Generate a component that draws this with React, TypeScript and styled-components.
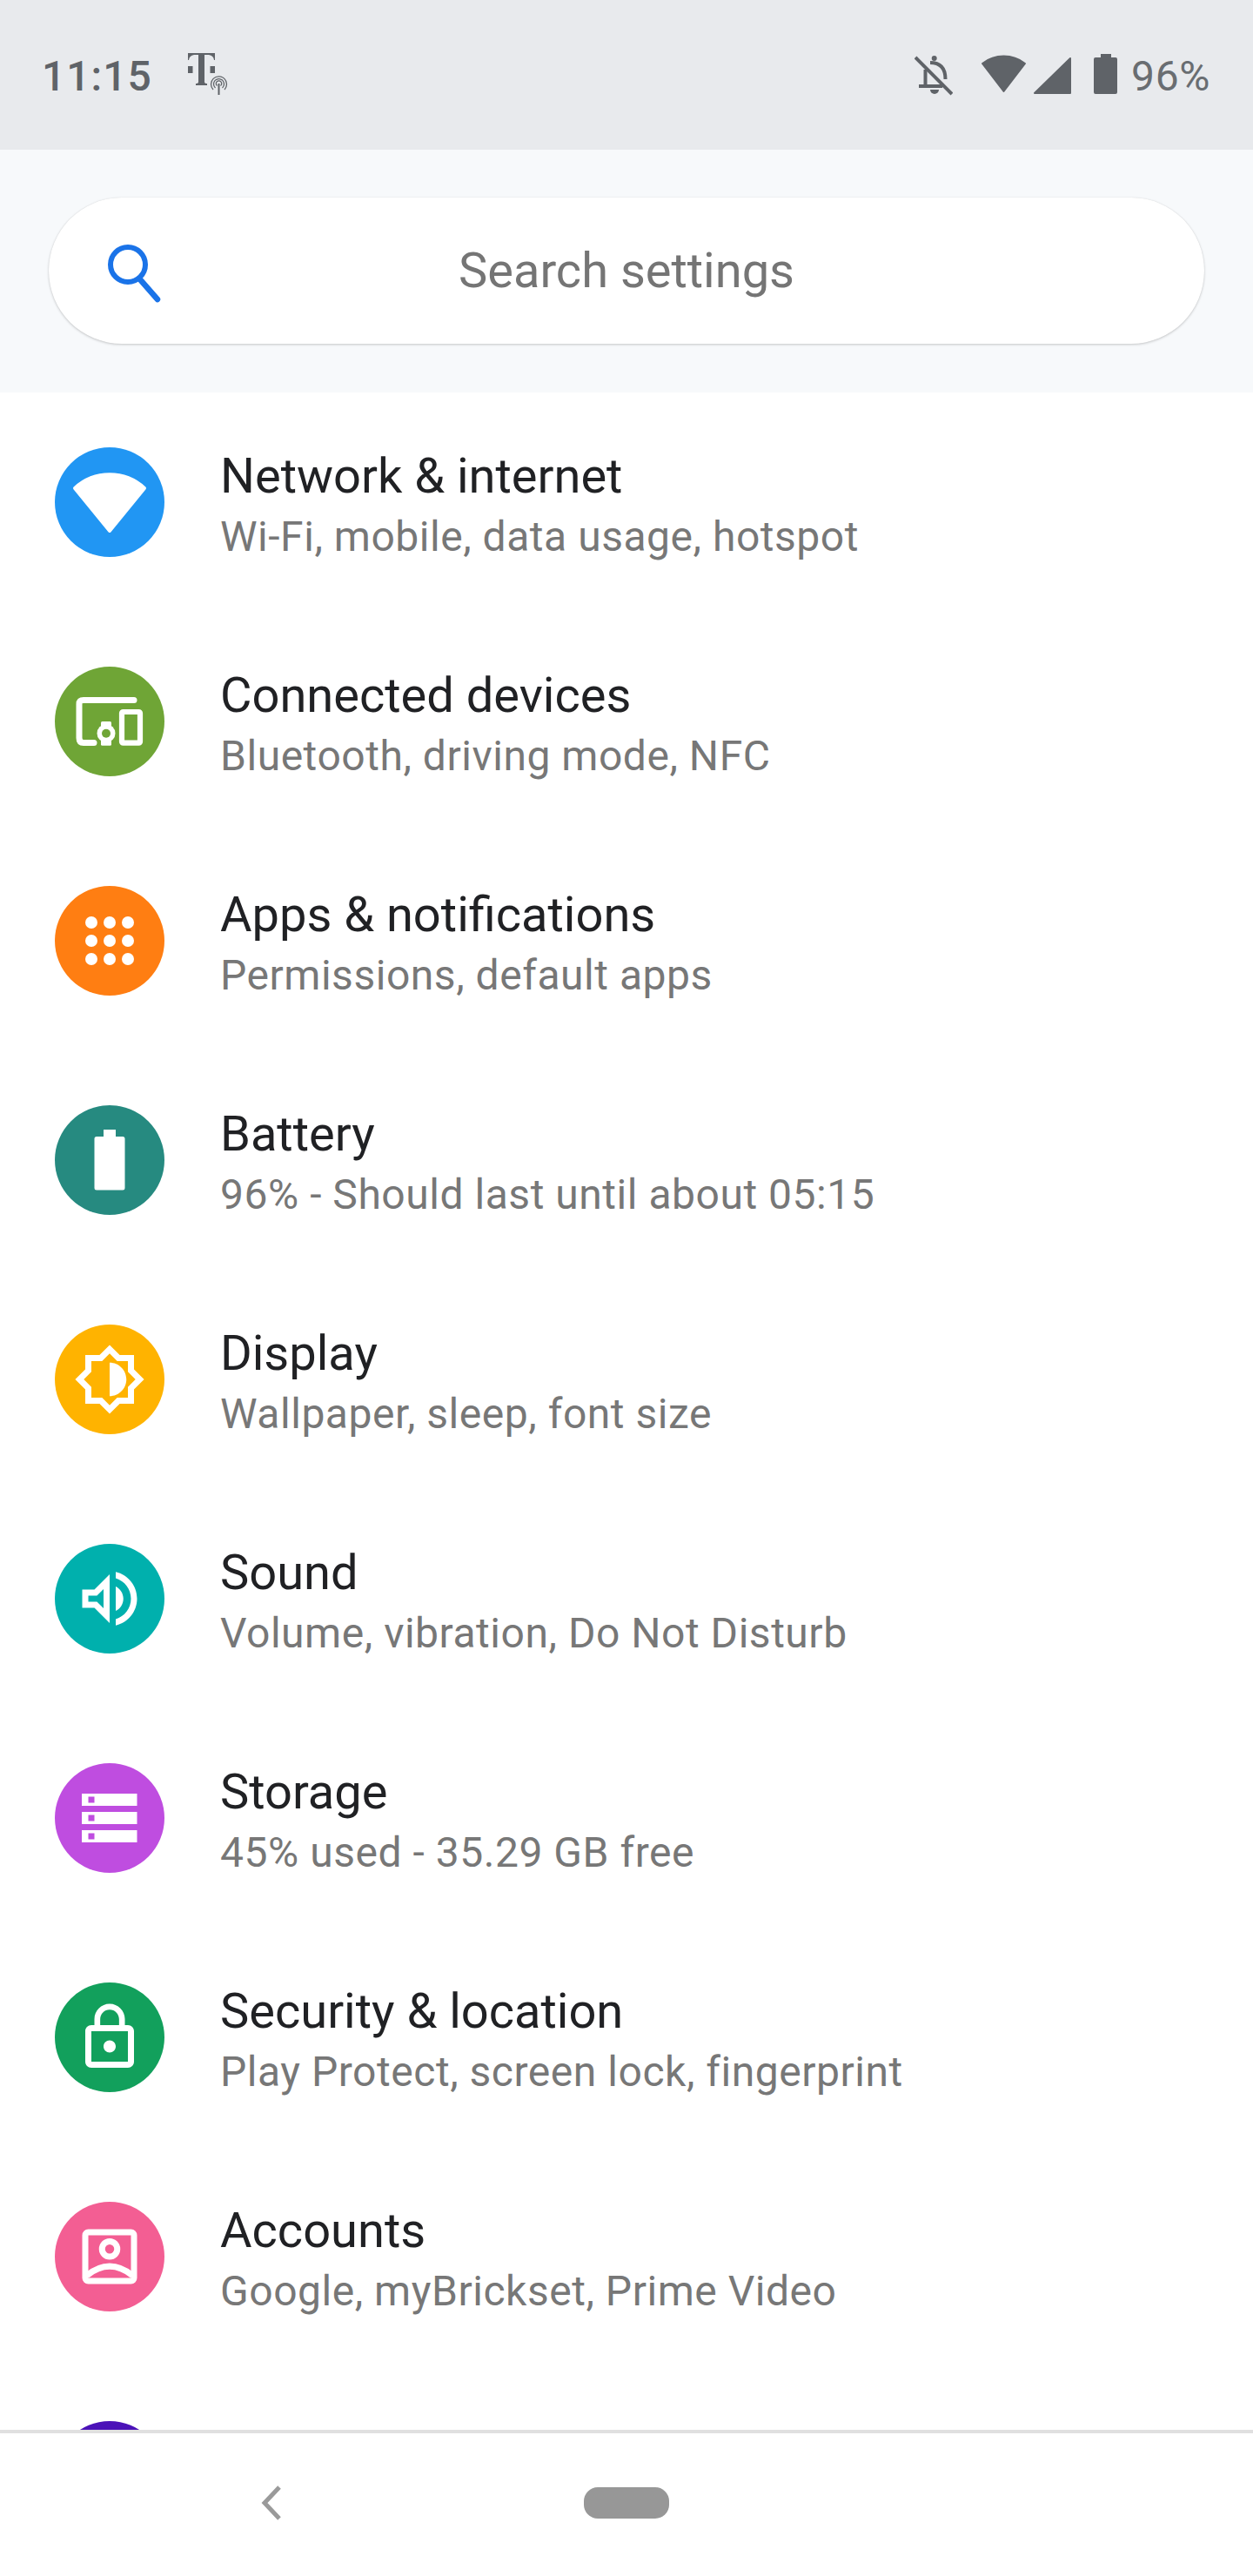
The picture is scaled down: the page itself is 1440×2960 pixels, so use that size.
import React from 'react';
import styled, { createGlobalStyle } from 'styled-components';

const Global = createGlobalStyle`
  html, body { margin: 0; padding: 0; background: #fff; }
  body { font-family: Roboto, "Liberation Sans", sans-serif; }
`;

const Screen = styled.div`
  width: 1440px;
  height: 2960px;
  display: flex;
  flex-direction: column;
  overflow: hidden;
  background: #fff;
`;

const StatusBar = styled.header`
  flex: none;
  height: 172px;
  display: flex;
  align-items: center;
  justify-content: space-between;
  padding: 0 49px 0 48px;
  background: #e8eaed;
  color: #5f6368;
`;

const StatusGroup = styled.div`
  display: flex;
  align-items: center;
`;

const StatusText = styled.span`
  font-size: 48px;
  line-height: 56px;
  padding-top: 4px;
  letter-spacing: 0.6px;
`;

const Clock = styled(StatusText)`
  font-weight: 500;
  letter-spacing: 1px;
`;

const Percent = styled(StatusText)`
  margin-left: 16px;
  color: #696d71;
`;

const StatusIcon = styled.svg<{ $ml: number }>`
  display: block;
  flex: none;
  height: 48px;
  margin-left: ${p => p.$ml}px;
  fill: #5f6368;
`;

const CarrierIcon = styled(StatusIcon)`
  margin-top: -2px;
`;

const SearchSection = styled.section`
  flex: none;
  height: 279px;
  box-sizing: border-box;
  padding: 55px 56px 56px;
  background: #f7f9fb;
`;

const SearchPill = styled.div`
  position: relative;
  height: 168px;
  width: 1328px;
  display: flex;
  align-items: center;
  justify-content: center;
  border-radius: 84px;
  background: #fff;
  box-shadow: 0 1px 3px rgba(0, 0, 0, 0.2), 0 0 1px rgba(0, 0, 0, 0.1);
`;

const SearchIcon = styled.svg`
  position: absolute;
  left: 60px;
  top: 49px;
`;

const SearchText = styled.span`
  font-size: 56px;
  line-height: 64px;
  color: #757575;
`;

const List = styled.main`
  flex: 1;
  min-height: 0;
  overflow: hidden;
`;

const Row = styled.div`
  height: 252px;
  display: flex;
  align-items: flex-start;
  padding-left: 63px;
`;

const Badge = styled.svg`
  display: block;
  flex: none;
  align-self: center;
  width: 126px;
  height: 126px;
`;

const RowText = styled.div`
  margin-left: 64px;
  padding-top: 62px;
`;

const Title = styled.div`
  font-size: 56px;
  line-height: 68px;
  color: #202124;
`;

const Subtitle = styled.div`
  margin-top: 2px;
  font-size: 48px;
  line-height: 68px;
  color: #777777;
  letter-spacing: 0.53px;
`;

const NavBar = styled.footer`
  flex: none;
  height: 168px;
  box-sizing: border-box;
  display: flex;
  align-items: center;
  padding: 0 0 5px 300px;
  border-top: 4px solid #e0e0e0;
  background: #fff;
`;

const BackIcon = styled.svg`
  display: block;
  width: 24px;
  height: 40px;
`;

const HomePill = styled.div`
  width: 98px;
  height: 36px;
  margin-left: 347px;
  border-radius: 16px;
  background: #979797;
`;

const M: React.FC<{ d: string }> = ({ d }) => (
  <path d={d} fill="#fff" fillRule="evenodd" transform="translate(21 21) scale(3.5)" />
);

type Item = { title?: string; sub?: string; color: string; art: React.ReactNode };

const items: Item[] = [
  {
    title: 'Network & internet',
    sub: 'Wi-Fi, mobile, data usage, hotspot',
    color: '#2196f3',
    art: <path d="M23 47A59 59 0 0 1 103 47L63 96Z" fill="#fff" stroke="#fff" strokeWidth="4" strokeLinejoin="round" />,
  },
  {
    title: 'Connected devices',
    sub: 'Bluetooth, driving mode, NFC',
    color: '#6fa536',
    art: (
      <>
        <path d="M91 38.5H33Q28 38.5 28 43V82Q28 87.5 33 87.5H45" fill="none" stroke="#fff" strokeWidth="7" strokeLinecap="round" />
        <rect x="77" y="52" width="21" height="35.7" rx="1.5" fill="none" stroke="#fff" strokeWidth="6.2" />
        <rect x="53" y="63" width="12" height="27.7" rx="1.5" fill="#fff" />
        <circle cx="59" cy="76.7" r="10.5" fill="#fff" />
        <circle cx="59" cy="76.7" r="5" fill="#6fa536" />
      </>
    ),
  },
  {
    title: 'Apps & notifications',
    sub: 'Permissions, default apps',
    color: '#ff7e12',
    art: (
      <g fill="#fff">
        {[42, 63, 84].flatMap(y =>
          [42, 63, 84].map(x => <circle key={`${x}-${y}`} cx={x} cy={y} r="7" />)
        )}
      </g>
    ),
  },
  {
    title: 'Battery',
    sub: '96% - Should last until about 05:15',
    color: '#268a80',
    art: <path d="M56 28H70V36H78Q80.500 36 80.500 38.500V95Q80.500 97.500 78 97.500H48Q45.500 97.500 45.500 95V38.500Q45.500 36 48 36H56Z" fill="#fff" />,
  },
  {
    title: 'Display',
    sub: 'Wallpaper, sleep, font size',
    color: '#ffb300',
    art: <M d="M20 8.69V4h-4.69L12 .69 8.69 4H4v4.69L.69 12 4 15.31V20h4.69L12 23.31 15.31 20H20v-4.69L23.31 12 20 8.69zm-2 5.79V18h-3.52L12 20.48 9.52 18H6v-3.52L3.52 12 6 9.52V6h3.52L12 3.52 14.48 6H18v3.52L20.48 12 18 14.48zM12 6.5v11c3.03 0 5.5-2.47 5.5-5.5S15.03 6.500 12 6.500z" />,
  },
  {
    title: 'Sound',
    sub: 'Volume, vibration, Do Not Disturb',
    color: '#00b0ad',
    art: <M d="M3 9v6h4l5 5V4L7 9H3zm7-.17v6.34L7.83 13H5v-2h2.83L10 8.83zM16.500 12c0-1.770-1.020-3.290-2.500-4.030v8.050c1.480-.73 2.500-2.250 2.500-4.020zM14 3.230v2.060c2.890.86 5 3.540 5 6.710s-2.110 5.850-5 6.710v2.060c4.010-.91 7-4.490 7-8.770 0-4.280-2.990-7.860-7-8.770z" />,
  },
  {
    title: 'Storage',
    sub: '45% used - 35.29 GB free',
    color: '#bf4de0',
    art: (
      <>
        {[35, 56, 77].map(y => (
          <React.Fragment key={y}>
            <rect x="31" y={y} width="63.500" height="14" fill="#fff" />
            <rect x="38.500" y={y + 3.500} width="7" height="7" fill="#bf4de0" />
          </React.Fragment>
        ))}
      </>
    ),
  },
  {
    title: 'Security & location',
    sub: 'Play Protect, screen lock, fingerprint',
    color: '#12a05c',
    art: <M d="M12 17c1.100 0 2-.9 2-2s-.9-2-2-2-2 .9-2 2 .9 2 2 2zm6-9h-1V6c0-2.760-2.240-5-5-5S7 3.240 7 6v2H6c-1.100 0-2 .9-2 2v10c0 1.100.9 2 2 2h12c1.100 0 2-.9 2-2V10c0-1.100-.9-2-2-2zM8.900 6c0-1.710 1.390-3.100 3.100-3.100s3.100 1.390 3.100 3.100v2H8.900V6zM18 20H6V10h12v10z" />,
  },
  {
    title: 'Accounts',
    sub: 'Google, myBrickset, Prime Video',
    color: '#f35e93',
    art: (
      <g transform="translate(21 21) scale(3.5)" fill="none" stroke="#fff" strokeWidth="2">
        <rect x="4" y="4" width="16" height="16" rx="1" />
        <circle cx="12" cy="9.500" r="2.500" />
        <path d="M4.500 18.200Q12 12.200 19.500 18.200" />
      </g>
    ),
  },
  { color: '#4b12b8', art: null },
];

export default function App() {
  return (
    <Screen>
      <Global />
      <StatusBar>
        <StatusGroup>
          <Clock>11:15</Clock>
          <CarrierIcon $ml={41} width="46" viewBox="0 0 46 48">
            <path d="M0 0H31V8H30Q29.500 3 24 2H19V33Q19 35 22 35V37H9V35Q12 35 12 33V2H7Q1.500 3 1 8H0Z" />
            <rect x="0" y="15" width="5.500" height="8" />
            <rect x="25.500" y="15" width="5.500" height="8" />
            <g fill="none" stroke="#5f6368" strokeWidth="1.300">
              <path d="M29 42A9 9 0 1 1 42 42" />
              <path d="M31.500 40A6 6 0 1 1 39.500 40" />
              <path d="M33.500 37.500A3.200 3.200 0 1 1 37.500 37.500" />
            </g>
            <rect x="34.500" y="35" width="2" height="13" />
          </CarrierIcon>
        </StatusGroup>
        <StatusGroup>
          <StatusIcon $ml={0} width="44" viewBox="0 0 44 48">
            <circle cx="22.700" cy="5" r="3" />
            <g fill="none" stroke="#5f6368" strokeWidth="4">
              <path d="M1 4L43 46" />
              <path d="M5 37H32" />
              <path d="M12.500 18V36" />
              <path d="M18 10Q35.500 10 35.500 29" />
            </g>
            <path d="M18 41h10a5 5 0 0 1-10 0z" />
          </StatusIcon>
          <StatusIcon $ml={32} width="53" viewBox="0 0 53 48">
            <path d="M2 11A40 40 0 0 1 51 11L26.500 43Z" stroke="#5f6368" strokeWidth="2" strokeLinejoin="round" />
          </StatusIcon>
          <StatusIcon $ml={8} width="43" viewBox="0 0 43 48">
            <path d="M1 45L42 5V45Z" stroke="#5f6368" strokeWidth="2" strokeLinejoin="round" />
          </StatusIcon>
          <StatusIcon $ml={26} width="27" viewBox="0 0 27 48">
            <path d="M8 0H20V4H25Q27 4 27 6V44Q27 46 25 46H2Q0 46 0 44V6Q0 4 2 4H8Z" />
          </StatusIcon>
          <Percent>96%</Percent>
        </StatusGroup>
      </StatusBar>
      <SearchSection>
        <SearchPill>
          <SearchIcon width="70" height="74" viewBox="0 0 70 74" fill="none" stroke="#1a73e8">
            <circle cx="31" cy="28" r="20" strokeWidth="6" />
            <path d="M44 44L65 68" strokeWidth="6.500" strokeLinecap="round" />
          </SearchIcon>
          <SearchText>Search settings</SearchText>
        </SearchPill>
      </SearchSection>
      <List>
        {items.map(item => (
          <Row key={item.color}>
            <Badge viewBox="0 0 126 126">
              <circle cx="63" cy="63" r="63" fill={item.color} />
              {item.art}
            </Badge>
            {item.title && (
              <RowText>
                <Title>{item.title}</Title>
                <Subtitle>{item.sub}</Subtitle>
              </RowText>
            )}
          </Row>
        ))}
      </List>
      <NavBar>
        <BackIcon viewBox="0 0 24 40" fill="none" stroke="#9a9a9a" strokeWidth="5">
          <path d="M21 2L4 20L21 38" />
        </BackIcon>
        <HomePill />
      </NavBar>
    </Screen>
  );
}
